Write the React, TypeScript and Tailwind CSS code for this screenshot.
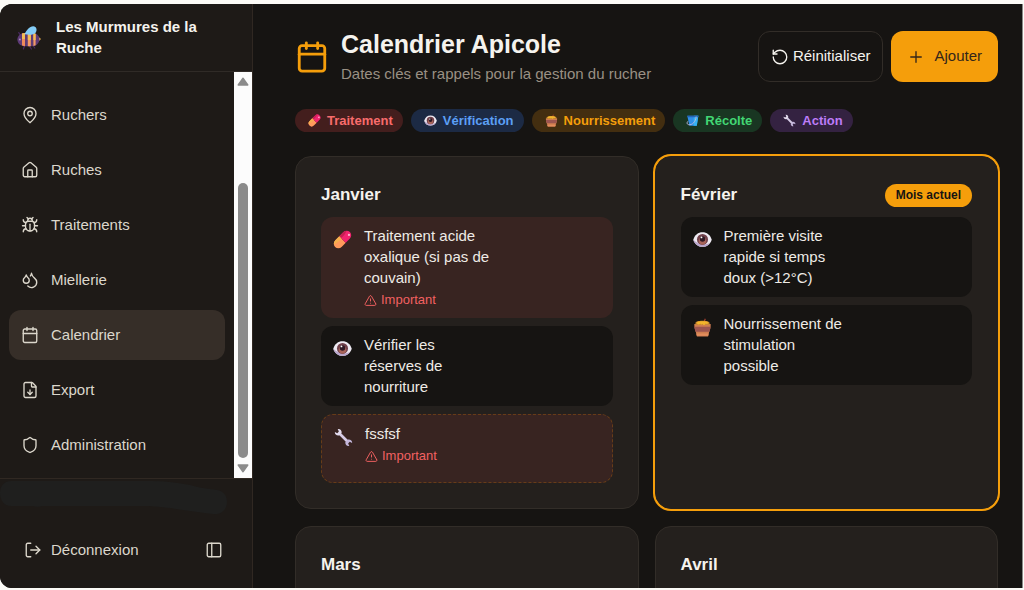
import type { ComponentType, ReactNode } from 'react';
import {
  Bug,
  Calendar,
  Droplets,
  FileDown,
  House,
  LogOut,
  MapPin,
  PanelLeft,
  Plus,
  RotateCcw,
  Shield,
  TriangleAlert,
} from 'lucide-react';

type IconProps = { className?: string };

function PillIcon({ className }: IconProps) {
  return (
    <svg viewBox="0 0 20 20" className={className} aria-hidden="true">
      <g transform="rotate(-45 10 10)">
        <path d="M10 5.2H3.800a4.8 4.8 0 0 0 0 9.6H10z" fill="#ff9a5c" />
        <path d="M10 5.2h6.200a4.8 4.8 0 0 1 0 9.6H10z" fill="#f0246f" />
        <path d="M10 5.2h6.200a4.8 4.8 0 0 1 3.200 1.400C17 7.800 13.400 8 10 7.800z" fill="#c51f52" />
        <path d="M3.800 5.2a4.8 4.8 0 0 0-3.700 1.900C2.600 8.600 6.600 8.800 10 8.400V5.2z" fill="#f5b04e" />
      </g>
      <circle cx="16.800" cy="5.200" r="1.200" fill="#ffb3cf" />
    </svg>
  );
}

function EyeIcon({ className }: IconProps) {
  return (
    <svg viewBox="0 0 20 20" className={className} aria-hidden="true">
      <path d="M.3 10.200C1.800 5 5.400 2.300 10 2.300s8.200 2.700 9.700 7.900c-1.500 5-5.100 7.500-9.700 7.500S1.800 15.200.3 10.200z" fill="#eeeaf2" />
      <path d="M.3 10.200c1.500 5 5.100 7.500 9.700 7.500 3.400 0 6.200-1.400 8-4.100-5 2.300-12.400 2-17.700-3.400z" fill="#b9a6cc" />
      <circle cx="10" cy="9.900" r="5.800" fill="#70404a" />
      <circle cx="10" cy="11.400" r="4" fill="#a8645a" />
      <circle cx="10" cy="9.400" r="2.900" fill="#2f1925" />
      <circle cx="8.900" cy="7.800" r="1" fill="#fff" />
    </svg>
  );
}

function HoneyIcon({ className }: IconProps) {
  return (
    <svg viewBox="0 0 20 20" className={className} aria-hidden="true">
      <path d="M11.200 3.600 12.400.6l1.100.4-.9 3z" fill="#a8402f" />
      <path d="M1.400 6.400h17.200c.2 3.600-.6 6.200-1.800 9l-.7 3.200c-.1.600-.4.900-1 .9H4.900c-.6 0-.9-.3-1-.9l-.7-3.200C2 12.600 1.200 10 1.400 6.400z" fill="#cf7e50" />
      <path d="M1.500 9.200h17c-.2 2-.6 3.600-1.200 5.200H2.700c-.6-1.600-1-3.200-1.200-5.200z" fill="#9c5550" />
      <path d="M2.600 5.200c0-1.200 3-2.200 7.400-2.200s7.400 1 7.400 2.200v2H2.600z" fill="#c98a2c" />
      <path d="M4 4.800c1-.9 3.200-1.400 6-1.400s5 .5 6 1.400c-.4 1.800-1.800 2-2.600.8-.4 2.200-2.600 2.200-3.200.4-.6 1.200-2.200 1.200-2.600-.2C6.600 7.400 4.400 7 4 4.800z" fill="#f2b52c" />
      <path d="M3.500 16.400h13l-.5 2.400H4z" fill="#e28d5c" />
    </svg>
  );
}

function BucketIcon({ className }: IconProps) {
  return (
    <svg viewBox="0 0 20 20" className={className} aria-hidden="true">
      <path d="M2 2.500h17L16.600 18H5.200z" fill="#2f8fe8" />
      <path d="M12 2.500h7L16.600 18h-5z" fill="#35b3f5" />
      <path d="M2 2.500h17l-.4 2.600H2.500z" fill="#2463b8" />
      <path d="M15.600 4.500C15 12 9.500 17.500 4 16.400c-2.600-.6-3-3-1.600-4.600" fill="none" stroke="#b9b6dc" strokeWidth="1.500" strokeLinecap="round" />
    </svg>
  );
}

function WrenchIcon({ className }: IconProps) {
  return (
    <svg viewBox="0 0 20 20" className={className} aria-hidden="true">
      <path d="M6.800 4.800 15.200 13.200 13.200 15.200 4.800 6.800z" fill="#d6cbe6" />
      <path d="M.9 4.300 3.500 5.400 5.100 3.800 3.900 1.100C6.300.6 8.300 2.400 8.100 5L5.400 7.900C2.800 8.300.6 6.700.9 4.300z" fill="#e3dbee" />
      <path d="M19.100 15.700l-2.600-1.100-1.600 1.600 1.200 2.700c-2.400.5-4.400-1.300-4.200-3.900l2.700-2.900c2.600-.4 4.800 1.200 4.500 3.600z" fill="#c3b6da" />
    </svg>
  );
}

function BeeIcon({ className }: IconProps) {
  return (
    <svg viewBox="0 0 24 24" className={className} aria-hidden="true">
      <path d="M7.500 19.500 6.400 23M12 19.500l2.400 3.500M16 19.500l1.800 2.500M3.200 9 1.800 6.600" stroke="#4b2a63" strokeWidth="1.200" fill="none" strokeLinecap="round" />
      <path d="M21 10.500 24 13l-2.600 2.600z" fill="#f0b44a" />
      <path d="M7.500 7h8c4 0 6.900 2.800 6.900 6.200s-2.900 7-6.900 7h-8C3.300 20.200.4 17.200.4 13.600S3.300 7 7.500 7z" fill="#5d3a76" />
      <path d="M5 7.600 8 7v13.200l-3-.6z" fill="#ee8a5a" />
      <path d="M10.800 7h3v13.200h-3zM16.400 7.100l2.200.7v11.400l-2.200.9z" fill="#f29a63" />
      <path d="M5 7.600 8 7v6H5zM10.800 7h3v7h-3zM16.400 7.100l2.200.7V14h-2.200z" fill="#f4bd52" />
      <circle cx="2.900" cy="13.400" r="1" fill="#a58ab8" />
      <path d="M7.500 8.200C9.500 4.500 12.500.3 16.200.3c3.600 0 4.400 4.200 2.200 6.600C16.500 9.100 11.500 8.800 7.500 8.200z" fill="#84cdf7" />
    </svg>
  );
}

type Kind = 'traitement' | 'verification' | 'nourrissement' | 'recolte' | 'action';

const kinds: Record<Kind, { label: string; icon: ComponentType<IconProps>; pill: string }> = {
  traitement: { label: 'Traitement', icon: PillIcon, pill: 'bg-[#431e1d] text-[#f86c6c]' },
  verification: { label: 'Vérification', icon: EyeIcon, pill: 'bg-[#1c2a44] text-[#5b9ff5]' },
  nourrissement: { label: 'Nourrissement', icon: HoneyIcon, pill: 'bg-[#432e10] text-[#f59e0b]' },
  recolte: { label: 'Récolte', icon: BucketIcon, pill: 'bg-[#193622] text-[#42d674]' },
  action: { label: 'Action', icon: WrenchIcon, pill: 'bg-[#342241] text-[#bd7cf8]' },
};

type Task = { kind: Kind; title: string; important?: boolean; custom?: boolean };

const months: { name: string; current?: boolean; tasks: Task[] }[] = [
  {
    name: 'Janvier',
    tasks: [
      { kind: 'traitement', title: 'Traitement acide oxalique (si pas de couvain)', important: true },
      { kind: 'verification', title: 'Vérifier les réserves de nourriture' },
      { kind: 'action', title: 'fssfsf', important: true, custom: true },
    ],
  },
  {
    name: 'Février',
    current: true,
    tasks: [
      { kind: 'verification', title: 'Première visite rapide si temps doux (>12°C)' },
      { kind: 'nourrissement', title: 'Nourrissement de stimulation possible' },
    ],
  },
  { name: 'Mars', tasks: [] },
  { name: 'Avril', tasks: [] },
];

const links = [
  { label: 'Ruchers', icon: MapPin },
  { label: 'Ruches', icon: House },
  { label: 'Traitements', icon: Bug },
  { label: 'Miellerie', icon: Droplets },
  { label: 'Calendrier', icon: Calendar, active: true },
  { label: 'Export', icon: FileDown },
  { label: 'Administration', icon: Shield },
];

function Scrollbar() {
  return (
    <div className="flex w-[18px] shrink-0 flex-col items-center bg-[#fcfcfc] py-[5px]" aria-hidden="true">
      <svg viewBox="0 0 12 9" className="h-[9px] w-3">
        <path d="M6 1.200 10.800 8H1.200z" fill="#8b8b8b" stroke="#8b8b8b" strokeWidth="1.400" strokeLinejoin="round" />
      </svg>
      <div className="flex w-2.5 grow flex-col pt-[97px] pb-1.5">
        <div className="grow rounded-full bg-[#8b8b8b]" />
      </div>
      <svg viewBox="0 0 12 9" className="h-[9px] w-3">
        <path d="M6 7.800 10.800 1H1.200z" fill="#8b8b8b" stroke="#8b8b8b" strokeWidth="1.400" strokeLinejoin="round" />
      </svg>
    </div>
  );
}

function Sidebar() {
  return (
    <aside className="flex w-[253px] shrink-0 flex-col border-r border-[#302822] bg-[#1e1a17] text-[#dcd7cc]">
      <div className="flex h-[68px] shrink-0 items-center gap-[15px] border-b border-[#302b27] px-[17px]">
        <BeeIcon className="size-6 shrink-0" />
        <p className="pb-0.5 text-[15px] leading-[21px] font-bold text-[#f5f3ee]">Les Murmures de la Ruche</p>
      </div>
      <div className="flex min-h-0 grow">
        <nav className="flex grow flex-col gap-[5px] overflow-hidden px-[9px] py-[18px]">
          {links.map(({ label, icon: Icon, active }) => (
            <a
              key={label}
              href="#"
              aria-current={active ? 'page' : undefined}
              className={`flex h-[50px] shrink-0 items-center gap-3 rounded-xl px-3 text-[15px] ${active ? 'bg-[#362e28]' : ''}`}
            >
              <Icon size={18} strokeWidth={1.8} />
              {label}
            </a>
          ))}
        </nav>
        <Scrollbar />
      </div>
      <div className="flex h-[110px] shrink-0 flex-col border-t border-[#302822]">
        <svg viewBox="0 0 252 36" className="h-9 w-[252px]" aria-hidden="true">
          <path d="M11 2H152c14 0 26 2 38 4 10 3 20 4 27 5 7 1 10 6 10 12 0 8-6 13-14 12-12-1-20-3-30-4-12-2-20-3-34-4H42c-3 1-6 1-9 0H11C3 27 0 20 0 14 0 7 4 2 11 2z" fill="#1f1f1e" />
        </svg>
        <div className="flex items-center justify-between pt-6 pr-[29px] pl-6">
          <button type="button" className="flex items-center gap-[9px] text-[15px] leading-[21px]">
            <LogOut size={18} strokeWidth={1.8} />
            Déconnexion
          </button>
          <button type="button" aria-label="Réduire le menu">
            <PanelLeft size={18} strokeWidth={1.8} />
          </button>
        </div>
      </div>
    </aside>
  );
}

function TaskRow({ kind, title, important, custom }: Task) {
  const Icon = kinds[kind].icon;
  return (
    <li
      className={`flex items-start gap-3 rounded-xl px-3 pt-2 ${important ? 'bg-[#382421]' : 'bg-[#161412]'} ${
        custom ? 'border border-dashed border-[#673c18] pb-[17px]' : 'pb-[9px]'
      }`}
    >
      <Icon className="mt-[5px] size-[19px] shrink-0" />
      <div className="grow pr-[108px]">
        <p className="text-[15px] leading-[21px] text-[#eeebe6]">{title}</p>
        {important && (
          <p className="flex h-[21px] items-center gap-1 pt-[3px] text-[13px] text-[#f26161]">
            <TriangleAlert size={13} strokeWidth={1.8} />
            Important
          </p>
        )}
      </div>
    </li>
  );
}

function MonthCard({ name, current, children }: { name: string; current?: boolean; children: ReactNode }) {
  return (
    <section
      className={`min-h-[180px] rounded-2xl border bg-[#24201d] p-[25px] ${
        current ? 'border-[#24201d] ring-2 ring-[#f59e0b]' : 'border-[#322d28]'
      }`}
    >
      <div className="flex h-[26px] items-center justify-between">
        <h2 className="text-[17px] font-bold text-[#f5f3ee]">{name}</h2>
        {current && (
          <span className="flex h-[23px] items-center rounded-full bg-[#f59e0b] px-[11px] text-[12px] font-bold text-[#161412]">
            Mois actuel
          </span>
        )}
      </div>
      <ul className="mt-[9px] flex flex-col gap-2">{children}</ul>
    </section>
  );
}

export default function App() {
  return (
    <div className="h-screen bg-[#fcfbf7] pt-1 pr-px pb-[2px] font-['Liberation_Sans',Arial,sans-serif]">
      <div className="flex h-full overflow-hidden rounded-l-xl bg-[#161412]">
        <Sidebar />
        <main className="min-w-0 grow overflow-hidden border-r border-[#8a8886] pt-6 pr-6 pl-[42px]">
          <header className="flex items-center justify-between">
            <div className="flex items-center gap-3">
              <Calendar size={34} className="text-[#f59e0b]" />
              <div>
                <h1 className="text-[25px] leading-8 font-bold text-[#f5f3ee]">Calendrier Apicole</h1>
                <p className="pt-[3px] text-[15px] leading-[22px] text-[#9a9084]">
                  Dates clés et rappels pour la gestion du rucher
                </p>
              </div>
            </div>
            <div className="flex gap-2">
              <button
                type="button"
                className="flex h-[51px] items-center gap-1 rounded-xl border border-[#322d28] px-3 text-[15px] text-[#f5f3ee]"
              >
                <RotateCcw size={18} strokeWidth={1.8} />
                Réinitialiser
              </button>
              <button
                type="button"
                className="flex h-[51px] items-center gap-[9px] rounded-xl bg-[#f59e0b] px-4 text-[15px] text-[#33261a]"
              >
                <Plus size={18} strokeWidth={1.8} />
                Ajouter
              </button>
            </div>
          </header>
          <ul className="mt-6 flex flex-wrap gap-2">
            {Object.values(kinds).map(({ label, icon: Icon, pill }) => (
              <li key={label} className={`flex h-[23px] items-center gap-1.5 rounded-full pr-2.5 pl-[13px] text-[13px] font-bold ${pill}`}>
                <Icon className="size-[13px]" />
                {label}
              </li>
            ))}
          </ul>
          <div className="mt-6 grid grid-cols-2 gap-x-4 gap-y-[17px]">
            {months.map(({ name, current, tasks }) => (
              <MonthCard key={name} name={name} current={current}>
                {tasks.map((task) => (
                  <TaskRow key={task.title} {...task} />
                ))}
              </MonthCard>
            ))}
          </div>
        </main>
      </div>
    </div>
  );
}
